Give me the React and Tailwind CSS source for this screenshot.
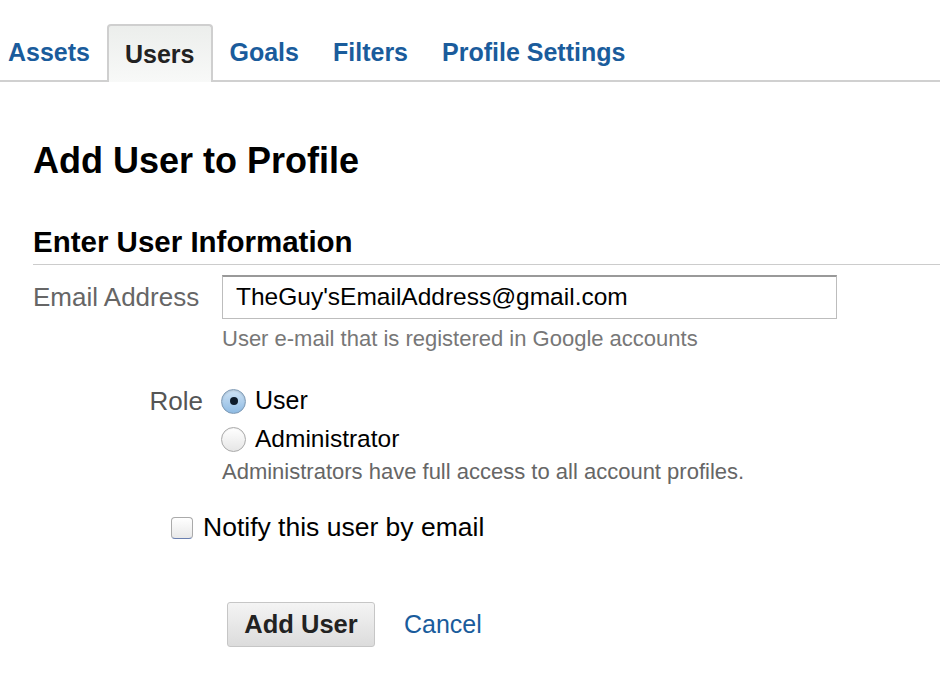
import React, { useState } from 'react';

const tabs = ['Assets', 'Users', 'Goals', 'Filters', 'Profile Settings'];

const Radio = ({ checked, onClick }) => (
  <span
    onClick={onClick}
    className={
      checked
        ? 'flex items-center justify-center w-[25px] h-[25px] rounded-full border border-[#7e9ab5] bg-gradient-to-b from-[#cfe3f5] to-[#8fbbe3] shadow-[inset_0_1px_2px_rgba(0,0,0,0.15)]'
        : 'flex items-center justify-center w-[25px] h-[25px] rounded-full border border-[#a9a9a9] bg-gradient-to-b from-[#ffffff] to-[#e6e6e6] shadow-[inset_0_1px_1px_rgba(0,0,0,0.05)]'
    }
  >
    {checked && <span className="w-[8px] h-[8px] rounded-full bg-[#0d1b2a]"></span>}
  </span>
);

const App = () => {
  const [role, setRole] = useState('user');
  const [email, setEmail] = useState("TheGuy'sEmailAddress@gmail.com");

  return (
    <div className="w-[940px] h-[698px] bg-white overflow-hidden font-['Liberation_Sans',Arial,sans-serif]">
      {/* Tabs */}
      <div className="pt-[24px] border-b-2 border-[#d0d0d0] flex items-end h-[82px]">
        {tabs.map((t, i) => (
          <div
            key={t}
            className={
              t === 'Users'
                ? 'h-[58px] -mb-[2px] px-[16px] flex items-center rounded-t-[4px] border-2 border-b-0 border-[#cfcfcf] bg-gradient-to-b from-[#eceeec] to-[#f8f9f8] text-[25px] font-bold text-[#222]'
                : i === 0
                ? 'h-[56px] pl-[8px] pr-[17px] flex items-center text-[25px] font-bold text-[#1a5c9c]'
                : 'h-[56px] px-[17px] flex items-center text-[25px] font-bold text-[#1a5c9c]'
            }
          >
            <span className="pt-[2px]">{t}</span>
          </div>
        ))}
      </div>

      {/* Title */}
      <h1 className="mt-[59px] ml-[33px] text-[36px] font-bold text-black leading-[40px]">
        Add User to Profile
      </h1>

      {/* Section */}
      <div className="mt-[44px] ml-[33px]">
        <h2 className="text-[29.5px] font-bold text-black leading-[34px]">Enter User Information</h2>
        <div className="mt-[5px] h-px bg-[#cccccc]"></div>
      </div>

      {/* Email */}
      <div className="mt-[10px] flex">
        <label className="w-[222px] pl-[33px] pt-[7px] text-[26px] leading-[30px] text-[#666]">Email Address</label>
        <div>
          <div className="w-[615px] h-[44px] border border-[#bdbdbd] border-t-[#999] border-t-2 flex items-center px-[13px]">
            <input
              value={email}
              onChange={(e) => setEmail(e.target.value)}
              className="w-full outline-none text-[24.5px] text-black bg-transparent"
            />
          </div>
          <p className="mt-[6px] text-[22px] leading-[28px] text-[#777]">User e-mail that is registered in Google accounts</p>
        </div>
      </div>

      {/* Role */}
      <div className="mt-[33px] flex">
        <div className="w-[221px] pr-[18px] text-right text-[26px] text-[#555] leading-[30px]">Role</div>
        <div>
          <div className="flex items-center gap-[9px] h-[30px]">
            <Radio checked={role === 'user'} onClick={() => setRole('user')} />
            <span className="text-[25px] text-black">User</span>
          </div>
          <div className="mt-[8px] flex items-center gap-[9px] h-[30px]">
            <Radio checked={role === 'admin'} onClick={() => setRole('admin')} />
            <span className="text-[24.5px] text-black">Administrator</span>
          </div>
          <p className="mt-[4px] pl-[1px] text-[22px] leading-[28px] text-[#666]">
            Administrators have full access to all account profiles.
          </p>
        </div>
      </div>

      {/* Notify */}
      <div className="mt-[27px] ml-[171px] flex items-center gap-[10px] h-[30px]">
        <span className="w-[22px] h-[22px] rounded-[4px] border border-[#aaa] bg-gradient-to-b from-[#ffffff] to-[#e8e8e8] border-b-[#6a7fb0]"></span>
        <span className="text-[26.5px] text-black">Notify this user by email</span>
      </div>

      {/* Actions */}
      <div className="mt-[59px] ml-[227px] flex items-center gap-[29px]">
        <button className="w-[148px] h-[45px] rounded-[3px] border border-[#c6c6c6] bg-gradient-to-b from-[#f4f4f4] to-[#dcdcdc] text-[25.5px] font-bold text-[#222]">
          Add User
        </button>
        <a href="#" className="text-[25px] text-[#1a5c9c]">Cancel</a>
      </div>
    </div>
  );
};

export default App;
